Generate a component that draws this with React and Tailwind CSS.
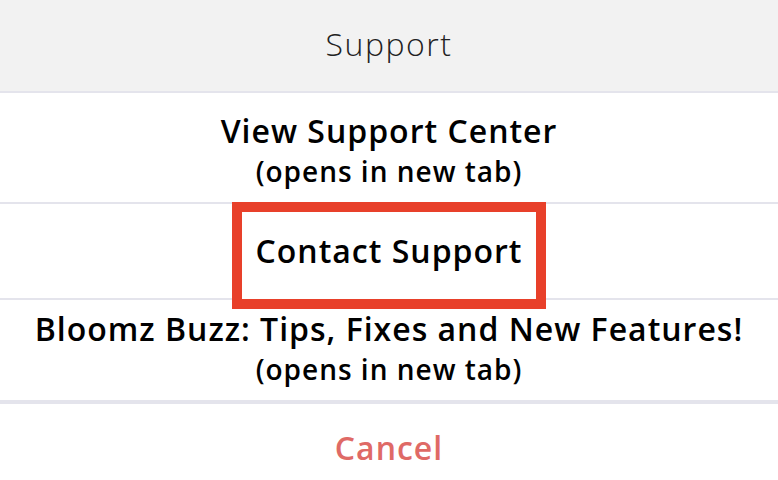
const items = [
  { title: 'View Support Center', sub: '(opens in new tab)', h: 'h-[111px] pt-[6px]' },
  { title: 'Contact Support', highlight: true, h: 'h-[96px]' },
  { title: 'Bloomz Buzz: Tips, Fixes and New Features!', sub: '(opens in new tab)', h: 'h-[100px] pb-[2px]' },
];

export default function App() {
  return (
    <div className="w-[778px] h-[480px] bg-white overflow-hidden font-['Open_Sans',sans-serif] text-black">
      {/* header */}
      <div className="h-[93px] pb-[4px] bg-[#f2f2f2] border-b-2 border-[#e4e4ec] flex items-center justify-center">
        <span className="text-[32px] font-light text-[#222] tracking-[1.5px]">Support</span>
      </div>

      {items.map((it, i) => (
        <div
          key={i}
          className={`${it.h} flex flex-col items-center justify-center ${i < items.length - 1 ? 'border-b-2 border-[#e4e4ec]' : ''}`}
        >
          {it.highlight ? (
            <div className="border-[10px] border-[#e8402a] w-[314px] h-[107px] -mt-[2px] -mb-[11px] pb-[10px] flex items-center justify-center relative z-10 bg-white">
              <span className="text-[32px] font-semibold leading-none tracking-[1px]">{it.title}</span>
            </div>
          ) : (
            <>
              <span className="text-[32px] font-semibold leading-[40px] tracking-[1px] whitespace-nowrap">{it.title}</span>
              {it.sub && <span className="text-[28px] font-semibold leading-[40px] tracking-[1px]">{it.sub}</span>}
            </>
          )}
        </div>
      ))}

      <div className="h-[4px] bg-[#e4e4ec]" />
      <div className="h-[76px] pt-[12px] flex items-center justify-center">
        <span className="text-[32px] font-semibold text-[#df6a66] tracking-[1px]">Cancel</span>
      </div>
    </div>
  );
}
